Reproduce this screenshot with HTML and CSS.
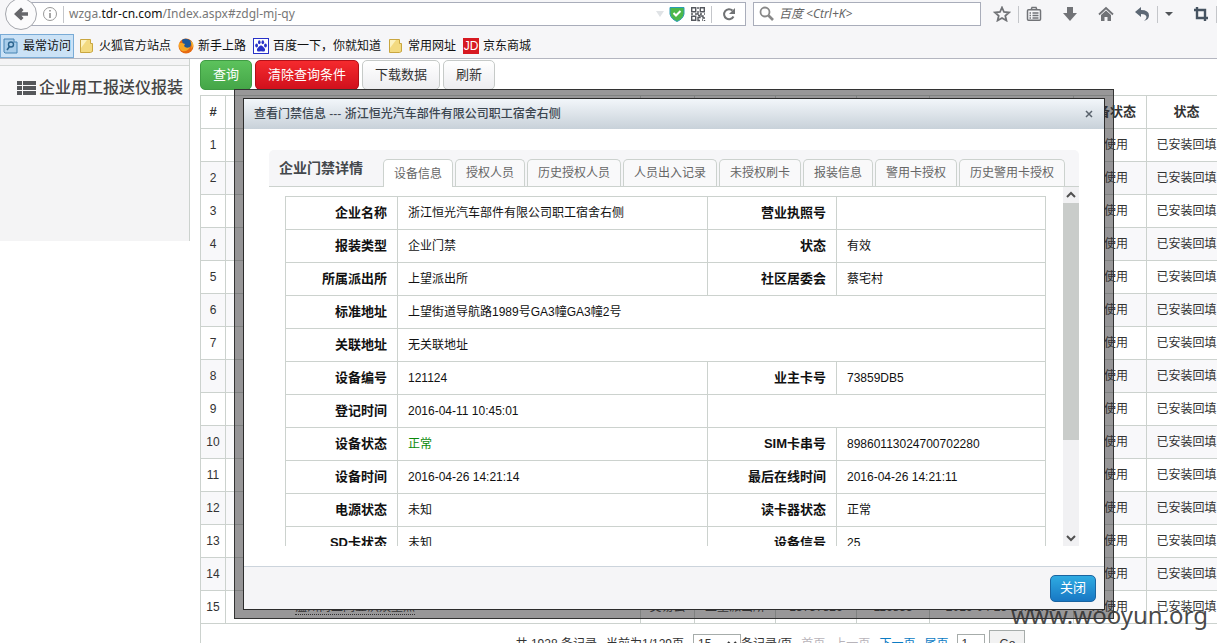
FILE: index.html
```html
<!DOCTYPE html>
<html lang="zh-CN">
<head>
<meta charset="utf-8">
<title>查看门禁信息</title>
<link rel="stylesheet" href="styles.css">
</head>
<body>
<header class="chrome">
  <div class="toolbar">
    <button class="back" aria-label="后退"><svg width="16" height="16" viewBox="0 0 16 16"><path d="M1 8L8 1.500L10.500 4L8.500 6.200H15V9.800H8.500L10.500 12L8 14.500z" fill="#66676b"/></svg></button>
    <div class="address">
      <svg width="16" height="16" viewBox="0 0 16 16"><circle cx="8" cy="8" r="6.500" fill="none" stroke="#999"/><path d="M8 7v5M8 4v1.600" stroke="#888" stroke-width="1.500"/></svg>
      <i class="divider"></i>
      <div class="url" role="textbox" contenteditable="true" aria-label="网址">wzga.<b>tdr-cn.com</b>/Index.aspx#zdgl-mj-qy</div>
      <svg width="8" height="6" viewBox="0 0 8 6"><path d="M0 0h8L4 6z" fill="#e0e3e6"/></svg>
      <svg width="16" height="16" viewBox="0 0 16 16"><path d="M1 1.500H15V8Q14 13 8 15.500Q2 13 1 8z" fill="#4cb84a" stroke="#2a9bb4"/><path d="M4.500 7L7 9.500L11.500 5" fill="none" stroke="#fff" stroke-width="2"/></svg>
      <svg width="16" height="16" viewBox="0 0 16 16" fill="none" stroke="#55585e" stroke-width="1.400"><path d="M1.700 1.700h4v4h-4zM10.300 1.700h4v4h-4zM1.700 10.300h4v4h-4z"/><path d="M8 1v2M8 5v3H5M1 8h2M10 8h2M14 8h1M8 9.500h2v2H8v3h2M11 10h2v2h2M12 14h1M14.500 14v1"/></svg>
      <i class="divider"></i>
      <button class="plain" aria-label="刷新页面"><svg width="16" height="16" viewBox="0 0 16 16"><path d="M12.500 10.500A5 5 0 1 1 11.500 4.500" fill="none" stroke="#707274" stroke-width="2"/><path d="M14 2v6H8z" fill="#707274"/></svg></button>
    </div>
    <div class="search">
      <svg width="16" height="16" viewBox="0 0 16 16"><circle cx="6" cy="6" r="4.500" fill="none" stroke="#888" stroke-width="1.800"/><path d="M9.500 9.500L14 14" stroke="#888" stroke-width="2.600"/></svg>
      <input type="text" aria-label="搜索" placeholder="百度 &lt;Ctrl+K&gt;">
    </div>
    <nav class="tools">
      <button class="plain" aria-label="收藏"><svg width="18" height="16" viewBox="0 0 18 16"><path d="M9 1.500L11 6L16 6.500L12.300 9.800L13.400 14.500L9 12L4.600 14.500L5.700 9.800L2 6.500L7 6z" fill="none" stroke="#717377" stroke-width="1.800"/></svg></button>
      <i class="divider"></i>
      <button class="plain" aria-label="书签"><svg width="16" height="16" viewBox="0 0 16 16"><path d="M2.500 3.800h11q1 0 1 1v8.400q0 1-1 1h-11q-1 0-1-1V4.800q0-1 1-1zM5 4L6 1.500h4L11 4M3.500 7H5M6.500 7H12.500M3.500 9.500H5M6.500 9.500H12.500M3.500 12H5M6.500 12H12.500" fill="none" stroke="#717377" stroke-width="1.500"/></svg></button>
      <button class="plain" aria-label="下载"><svg width="16" height="16" viewBox="0 0 16 16"><path d="M5 1h6v6h4L8 15L1 7h4z" fill="#717377"/></svg></button>
      <button class="plain" aria-label="主页"><svg width="16" height="16" viewBox="0 0 16 16"><path d="M1 8.500L8 2L15 8.500" fill="none" stroke="#717377" stroke-width="1.800"/><path d="M3 9L8 4.500L13 9v6H9.500v-4h-3v4H3z" fill="#717377"/></svg></button>
      <button class="plain" aria-label="撤销"><svg width="16" height="16" viewBox="0 0 16 16"><path d="M1 6L7 1v3q8 0 8 5.500Q15 13.500 10 15q2.500-2 2.500-4Q12 8 7 8v3z" fill="#5d6875"/></svg></button>
      <i class="divider"></i>
      <button class="plain" aria-label="更多"><svg width="8" height="5" viewBox="0 0 8 5"><path d="M0 0h8L4 4z" fill="#505458"/></svg></button>
      <button class="plain" aria-label="截图"><svg width="16" height="16" viewBox="0 0 16 16"><path d="M1 4h11v11M4 1v11h11" fill="none" stroke="#465361" stroke-width="2.400"/></svg></button>
      <i class="divider"></i>
    </nav>
  </div>
  <nav class="bookmarks">
    <a class="current" href="#"><svg width="16" height="16" viewBox="0 0 16 16"><path d="M1 1h10v3h3v11H2l-1-1z" fill="#a9cdea" stroke="#4784b4"/><circle cx="8" cy="6.500" r="2.500" fill="none" stroke="#2b648e" stroke-width="1.400"/><path d="M6.500 8.500L4 12" stroke="#2b648e" stroke-width="1.600"/></svg>最常访问</a>
    <a href="#"><svg width="16" height="16" viewBox="0 0 16 16"><path d="M1.500 1.500h10v4h2v8l-2 1h-10z" fill="#f3da80" stroke="#c9a640"/><path d="M2 2h6L2 10z" fill="#fcf2c0"/></svg>火狐官方站点</a>
    <a href="#"><svg width="16" height="16" viewBox="0 0 16 16"><circle cx="8" cy="8" r="7.500" fill="#e66a12"/><path d="M4 2Q8-1 13 3Q14 8 11 10Q7 11 5 7z" fill="#1f5796"/><path d="M1 5L4 5L7 6L6 8Q8 11 12 9Q10 14 4 13Q0 10 1 5" fill="#f6a623"/><path d="M12 3q3 4 1 8q3-3 2-6z" fill="#f7b733"/></svg>新手上路</a>
    <a href="#"><svg width="16" height="16" viewBox="0 0 16 16"><rect x=".5" y=".5" width="15" height="15" fill="#fff" stroke="#2932c8"/><g fill="#2932c8"><ellipse cx="3.600" cy="7.500" rx="1.400" ry="1.900"/><ellipse cx="6.300" cy="4.200" rx="1.300" ry="2"/><ellipse cx="9.800" cy="4.200" rx="1.300" ry="2"/><ellipse cx="12.500" cy="7.500" rx="1.400" ry="1.900"/><path d="M8 7.200Q10 8 12 11Q12.500 14 9.500 13.500Q8 13 6.500 13.500Q3.500 14 4 11Q6 8 8 7.200"/></g></svg>百度一下，你就知道</a>
    <a href="#"><svg width="16" height="16" viewBox="0 0 16 16"><path d="M1.500 1.500h10v4h2v8l-2 1h-10z" fill="#f3da80" stroke="#c9a640"/><path d="M2 2h6L2 10z" fill="#fcf2c0"/></svg>常用网址</a>
    <a href="#"><span class="jd">JD</span>京东商城</a>
  </nav>
</header>

<main class="page">
  <aside class="side">
    <h1><svg width="19" height="14" viewBox="0 0 19 14" fill="#55575a"><path d="M0 0h5v4H0zM6 0h13v4H6zM0 5h5v4H0zM6 5h13v4H6zM0 10h5v4H0zM6 10h13v4H6z"/></svg>企业用工报送仪报装</h1>
  </aside>
  <section class="content">
    <div class="actions">
      <button class="btn green">查询</button>
      <button class="btn red">清除查询条件</button>
      <button class="btn">下载数据</button>
      <button class="btn">刷新</button>
    </div>
    <div class="list">
      <table class="grid">
        <colgroup><col class="c-no"><col><col class="c-town"><col class="c-station"><col class="c-station"><col class="c-code"><col class="c-date"><col class="c-code"><col class="c-state"><col class="c-more"></colgroup>
        <thead><tr><th>#</th><th></th><th></th><th></th><th></th><th></th><th></th><th>设备状态</th><th>状态</th><th></th></tr></thead>
        <tbody>
          <tr><td>1</td><td></td><td></td><td></td><td></td><td></td><td></td><td>未使用</td><td>已安装回填</td><td></td></tr>
          <tr><td>2</td><td></td><td></td><td></td><td></td><td></td><td></td><td>未使用</td><td>已安装回填</td><td></td></tr>
          <tr><td>3</td><td></td><td></td><td></td><td></td><td></td><td></td><td>未使用</td><td>已安装回填</td><td></td></tr>
          <tr><td>4</td><td></td><td></td><td></td><td></td><td></td><td></td><td>未使用</td><td>已安装回填</td><td></td></tr>
          <tr><td>5</td><td></td><td></td><td></td><td></td><td></td><td></td><td>未使用</td><td>已安装回填</td><td></td></tr>
          <tr><td>6</td><td></td><td></td><td></td><td></td><td></td><td></td><td>未使用</td><td>已安装回填</td><td></td></tr>
          <tr><td>7</td><td></td><td></td><td></td><td></td><td></td><td></td><td>未使用</td><td>已安装回填</td><td></td></tr>
          <tr><td>8</td><td></td><td></td><td></td><td></td><td></td><td></td><td>未使用</td><td>已安装回填</td><td></td></tr>
          <tr><td>9</td><td></td><td></td><td></td><td></td><td></td><td></td><td>未使用</td><td>已安装回填</td><td></td></tr>
          <tr><td>10</td><td></td><td></td><td></td><td></td><td></td><td></td><td>未使用</td><td>已安装回填</td><td></td></tr>
          <tr><td>11</td><td></td><td></td><td></td><td></td><td></td><td></td><td>未使用</td><td>已安装回填</td><td></td></tr>
          <tr><td>12</td><td></td><td></td><td></td><td></td><td></td><td></td><td>未使用</td><td>已安装回填</td><td></td></tr>
          <tr><td>13</td><td></td><td></td><td></td><td></td><td></td><td></td><td>未使用</td><td>已安装回填</td><td></td></tr>
          <tr><td>14</td><td></td><td></td><td></td><td></td><td></td><td></td><td>未使用</td><td>已安装回填</td><td></td></tr>
          <tr><td>15</td><td class="name"><a href="#">温州尚上同业洪娱望点</a></td><td>交易云</td><td>上望派出所</td><td>13757826</td><td>116855</td><td>2016-04-25 14:21:05</td><td>未使用</td><td>已安装回填</td><td></td></tr>
        </tbody>
      </table>
      <div class="pager">
        <span>共 1928 条记录</span>
        <span>当前为1/129页</span>
        <label><select aria-label="每页条数"><option>15</option></select>条记录/页</label>
        <span class="off">首页</span>
        <span class="off">上一页</span>
        <a href="#">下一页</a>
        <a href="#">尾页</a>
        <input type="text" value="1" aria-label="页码">
        <button class="go">Go</button>
      </div>
    </div>
  </section>
</main>

<div class="dialog" role="dialog" aria-labelledby="dlg-title">
  <div class="window">
    <div class="titlebar">
      <h2 id="dlg-title">查看门禁信息 --- 浙江恒光汽车部件有限公司职工宿舍右侧</h2>
      <button class="plain" aria-label="关闭窗口"><svg width="8" height="8" viewBox="0 0 8 8"><path d="M1 1l6 6M7 1L1 7" stroke="#59626c" stroke-width="1.500"/></svg></button>
    </div>
    <div class="body">
      <div class="tabs" role="tablist">
        <h3>企业门禁详情</h3>
        <button role="tab" aria-selected="true">设备信息</button>
        <button role="tab">授权人员</button>
        <button role="tab">历史授权人员</button>
        <button role="tab">人员出入记录</button>
        <button role="tab">未授权刷卡</button>
        <button role="tab">报装信息</button>
        <button role="tab">警用卡授权</button>
        <button role="tab">历史警用卡授权</button>
      </div>
      <div class="pane">
        <div class="clip">
          <table class="detail">
            <colgroup><col class="d-label"><col><col class="d-label2"><col class="d-value2"></colgroup>
            <tr><th>企业名称</th><td>浙江恒光汽车部件有限公司职工宿舍右侧</td><th>营业执照号</th><td></td></tr>
            <tr><th>报装类型</th><td>企业门禁</td><th>状态</th><td>有效</td></tr>
            <tr><th>所属派出所</th><td>上望派出所</td><th>社区居委会</th><td>蔡宅村</td></tr>
            <tr><th>标准地址</th><td colspan="3">上望街道导航路1989号GA3幢GA3幢2号</td></tr>
            <tr><th>关联地址</th><td colspan="3">无关联地址</td></tr>
            <tr><th>设备编号</th><td>121124</td><th>业主卡号</th><td>73859DB5</td></tr>
            <tr><th>登记时间</th><td>2016-04-11 10:45:01</td><td colspan="2"></td></tr>
            <tr><th>设备状态</th><td class="ok">正常</td><th>SIM卡串号</th><td>89860113024700702280</td></tr>
            <tr><th>设备时间</th><td>2016-04-26 14:21:14</td><th>最后在线时间</th><td>2016-04-26 14:21:11</td></tr>
            <tr><th>电源状态</th><td>未知</td><th>读卡器状态</th><td>正常</td></tr>
            <tr><th>SD卡状态</th><td>未知</td><th>设备信号</th><td>25</td></tr>
          </table>
        </div>
        <div class="scroll">
          <svg width="10" height="16" viewBox="0 0 10 16"><path d="M1 10L5 6L9 10" fill="none" stroke="#505050" stroke-width="2"/></svg>
          <i class="thumb"></i>
          <svg width="10" height="16" viewBox="0 0 10 16"><path d="M1 6L5 10L9 6" fill="none" stroke="#505050" stroke-width="2"/></svg>
        </div>
      </div>
    </div>
    <div class="footer"><button class="btn blue">关闭</button></div>
  </div>
</div>
<div class="watermark">www.wooyun.org</div>
</body>
</html>
```

FILE: styles.css
```css
* { box-sizing: border-box; }
body {
  margin: 0;
  height: 100vh;
  overflow: hidden;
  position: relative;
  background: #fff;
  color: #333;
  font: 12px/18px "Liberation Sans", "Noto Sans CJK SC", sans-serif;
}
button, input, select { font: inherit; color: inherit; margin: 0; }
a { color: inherit; text-decoration: none; }
svg { display: block; flex: none; }
h1, h2, h3 { margin: 0; }
.plain { border: 0; padding: 0; background: none; }
.divider { width: 1px; height: 17px; background: #c4c6ca; flex: none; }

/* browser chrome */
.chrome { background: #f6f6f8; border-bottom: 1px solid #b4b6c0; }
.toolbar { display: flex; align-items: center; height: 34px; padding: 0 0 6px 5px; }
.back {
  width: 32px; height: 32px; flex: none; margin-right: -16px; padding: 0; z-index: 1;
  display: flex; align-items: center; justify-content: center;
  border: 1px solid #a4a6ac; border-radius: 50%; background: #fbfbfc;
}
.address, .search {
  display: flex; align-items: center; height: 24px;
  background: #fff; border: 1px solid #a9adba;
}
.address { flex: 1; padding: 0 8px 0 20px; gap: 5px; }
.address .plain { margin-left: 4px; }
.url { flex: 1; color: #777; font-family: "Noto Sans", sans-serif; white-space: nowrap; outline: 0; }
.url b { font-weight: 400; color: #111; }
.search { width: 228px; margin-left: 7px; padding: 0 5px; gap: 4px; }
.search input {
  flex: 1; min-width: 0; border: 0; padding: 0; background: none;
  font-family: "Noto Sans", "Noto Sans CJK SC", sans-serif; font-style: italic;
}
.search input::placeholder { color: #666; opacity: 1; }
.tools { display: flex; align-items: center; gap: 20px; margin-left: 12px; }
.tools .divider { margin: 0 -13px; }
.tools .divider:last-child { margin-right: 0; }

.bookmarks { display: flex; gap: 7px; height: 24px; color: #111; }
.bookmarks a { display: flex; align-items: center; gap: 4px; }
.bookmarks .current { padding: 0 2px; background: #cbe2f6; border: 1px solid #79abd6; margin-right: -2px; }
.jd { width: 16px; background: #d71921; color: #fff; text-align: center; line-height: 16px; }

/* page */
.page { display: flex; align-items: flex-start; gap: 10px; }
.side { width: 190px; flex: none; min-height: 182px; padding-top: 6px; background: #f4f4f5; border-right: 1px solid #ccd2ce; }
.side h1 {
  display: flex; align-items: center; gap: 3px; height: 41px; padding: 4px 0 0 17px;
  font-size: 16px; line-height: 24px; font-weight: 500; color: #444; white-space: nowrap;
  border: 1px solid #d5d8d6; border-width: 1px 0; background: #f9f9fa;
}
.content { flex: 1; min-width: 0; overflow: hidden; padding-top: 1px; }
.actions { display: flex; gap: 3px; margin-bottom: 5px; }
.btn {
  height: 30px; padding: 0 12px; border: 1px solid #c6cac8; border-radius: 5px;
  background: linear-gradient(#fff, #ededf0); font-size: 13px; color: #333;
}
.green { background: linear-gradient(#5cc25c, #45a648); border-color: #3f9b43; color: #fff; }
.red { background: linear-gradient(#f52a2e, #d0101c); border-color: #b01018; color: #fff; }
.blue { height: 27px; padding: 0 9px; background: linear-gradient(#2fabe2, #1878c4); border-color: #1a64a0; color: #fff; }

.list { width: calc(100% + 123px); }
.grid { width: 100%; table-layout: fixed; border-collapse: collapse; }
.grid th, .grid td { height: 33px; padding: 0; text-align: center; border: 1px solid #ccd2ce; white-space: nowrap; }
.grid th { font-size: 13px; }
.grid .name { text-align: left; padding-left: 69px; }
.name a { border-bottom: 1px dotted #333; }
.grid tbody tr:nth-child(even) { background: #f8f8fa; }
.c-no { width: 25px; }
.c-town { width: 54px; }
.c-station { width: 81px; }
.c-code { width: 73px; }
.c-date { width: 144px; }
.c-state { width: 80px; }
.c-more { width: 113px; }

.pager { display: flex; justify-content: center; align-items: center; gap: 9px; padding-top: 6px; border-left: 1px solid #ccd2ce; }
.pager label { display: flex; align-items: center; }
.pager select { width: 48px; height: 20px; border: 1px solid #a6acaa; background: #fff; }
.pager input { width: 28px; height: 20px; padding: 0 3px; border: 1px solid #a6acaa; }
.pager a { color: #0c7cc4; }
.off { color: #b8b4ba; }
.go { width: 36px; height: 27px; padding: 0; margin-left: -5px; border: 1px solid #a6acaa; background: #f2f2f2; }

/* dialog */
.dialog {
  position: absolute; top: 89px; left: 234px; right: 103px; bottom: 24px;
  padding: 9px; display: flex; border: 1px solid #333; background: rgba(50, 48, 50, .5);
}
.window { flex: 1; min-width: 0; display: flex; flex-direction: column; background: #fff; outline: 1px solid #2c2c2c; }
.titlebar {
  display: flex; align-items: center; justify-content: space-between; height: 30px; flex: none;
  padding: 0 11px 0 10px; background: linear-gradient(#f2f6fa, #c8d1d9);
}
.titlebar h2 { font-size: 12px; line-height: 18px; font-weight: 500; color: #3c4650; }
.body { flex: 1; min-height: 0; display: flex; flex-direction: column; padding: 21px 25px 20px; }
.tabs {
  display: flex; align-items: flex-end; gap: 2px; height: 37px; flex: none; padding-left: 10px;
  border-bottom: 1px solid #ccd2ce; background: #f6f6f8; border-radius: 5px 5px 0 0; white-space: nowrap;
}
.tabs h3 { width: 102px; font-size: 14px; line-height: 36px; color: #44484c; }
.tabs button {
  height: 27px; padding: 0 10px; color: #666; background: #f9f9fa;
  border: 1px solid #ccd2ce; border-bottom: 0; border-radius: 5px 5px 0 0;
}
.tabs button[aria-selected] { height: 28px; margin-bottom: -1px; background: #fff; }
.pane { flex: 1; min-height: 0; display: flex; }
.clip { flex: 1; overflow: hidden; padding: 9px 17px 0 16px; }
.detail { width: 100%; table-layout: fixed; border-collapse: collapse; color: #111; }
.detail th, .detail td { height: 33px; padding: 0 10px; border: 1px solid #ccd2ce; white-space: nowrap; }
.detail th { text-align: right; font-size: 13px; }
.d-label { width: 112px; }
.d-label2 { width: 129px; }
.d-value2 { width: 209px; }
.detail .ok { color: #0a8a0a; }
.scroll { width: 16px; display: flex; flex-direction: column; align-items: center; background: #f1f1f3; }
.thumb { width: 100%; height: 66%; background: #c9ccca; margin-bottom: auto; }
.footer {
  display: flex; align-items: center; justify-content: flex-end; height: 43px; flex: none;
  padding-right: 8px; background: #f5f5f7; border-top: 1px solid #ccd4dc;
}

.watermark {
  position: absolute; right: 9px; bottom: 8px; color: rgba(50, 50, 50, .9);
  font: 24px/40px "Noto Sans", sans-serif;
}
```
